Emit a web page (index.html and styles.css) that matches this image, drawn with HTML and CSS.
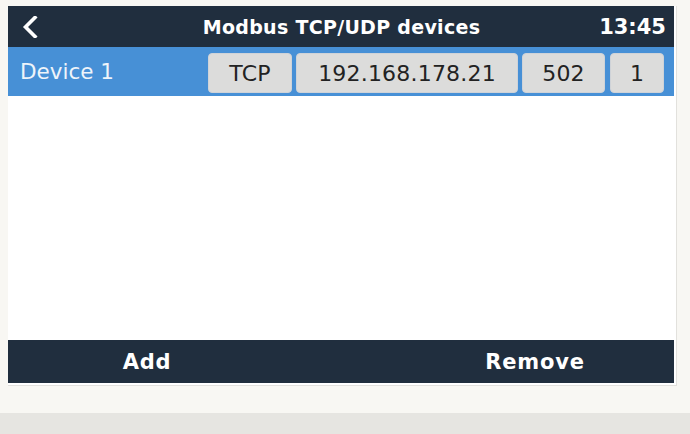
FILE: index.html
```html
<!DOCTYPE html>
<html>
<head>
<meta charset="utf-8">
<link rel="stylesheet" href="styles.css">
</head>
<body>
<div class="page">
  <div class="frame">
    <div class="screen">
      <header class="topbar">
        <span class="back">
          <svg width="16" height="22" viewBox="0 0 16 22"><path d="M13 1.5 L3.5 11 L13 20.5" fill="none" stroke="#ffffff" stroke-width="3.6" stroke-linecap="square"/></svg>
        </span>
        <span class="title">Modbus TCP/UDP devices</span>
        <span class="clock">13:45</span>
      </header>
      <div class="row">
        <span class="label">Device 1</span>
        <div class="fields">
          <span class="field f-proto">TCP</span>
          <span class="field f-ip">192.168.178.21</span>
          <span class="field f-port">502</span>
          <span class="field f-unit">1</span>
        </div>
      </div>
      <div class="list"></div>
      <footer class="bottombar">
        <span class="btn">Add</span>
        <span class="btn">Remove</span>
      </footer>
    </div>
  </div>
  <div class="band"></div>
</div>
</body>
</html>
```
FILE: styles.css
```css
html, body {
  margin: 0;
  padding: 0;
}
body {
  background: #f8f7f3;
  font-family: "DejaVu Sans", Verdana, sans-serif;
  width: 690px;
  height: 434px;
  overflow: hidden;
}
.page {
  display: flex;
  flex-direction: column;
  height: 434px;
}
.frame {
  margin: 6px 0 0 8px;
  width: 668px;
  background: #ffffff;
  border-right: 1px solid #e2e1dd;
  border-bottom: 1px solid #e2e1dd;
  padding-bottom: 2px;
}
.screen {
  width: 666px;
  display: flex;
  flex-direction: column;
}
.topbar {
  height: 41px;
  background: #202e3e;
  color: #ffffff;
  display: flex;
  align-items: center;
  position: relative;
  padding: 0 8px 0 14px;
}
.back {
  display: flex;
  width: 16px;
  height: 22px;
}
.title {
  position: absolute;
  left: 1px;
  right: 0;
  text-align: center;
  font-weight: bold;
  font-size: 19px;
  letter-spacing: 0.3px;
  pointer-events: none;
}
.clock {
  margin-left: auto;
  font-weight: bold;
  font-size: 21px;
}
.row {
  height: 49px;
  background: #4790d6;
  display: flex;
  align-items: flex-start;
  padding: 0 10px 0 12px;
}
.label {
  color: #eef4fa;
  font-size: 21.5px;
  line-height: 49px;
}
.fields {
  margin-left: auto;
  margin-top: 6px;
  display: flex;
  gap: 4px;
}
.field {
  height: 40px;
  box-sizing: border-box;
  background: #dcdcdb;
  border: 1px solid #cfd3d8;
  border-radius: 4px;
  color: #222222;
  font-size: 22px;
  letter-spacing: 0.2px;
  display: flex;
  align-items: center;
  justify-content: center;
}
.f-proto { width: 84px; }
.f-ip { width: 222px; }
.f-port { width: 83px; margin-right: 1px; }
.f-unit { width: 54px; }
.list {
  height: 244px;
  background: #ffffff;
}
.bottombar {
  height: 43px;
  background: #202e3e;
  display: flex;
  justify-content: space-between;
}
.btn {
  width: 278px;
  color: #ffffff;
  font-weight: bold;
  font-size: 21px;
  letter-spacing: 0.8px;
  display: flex;
  align-items: center;
  justify-content: center;
}
.band {
  margin-top: auto;
  height: 21px;
  background: #e6e5e1;
}
```
